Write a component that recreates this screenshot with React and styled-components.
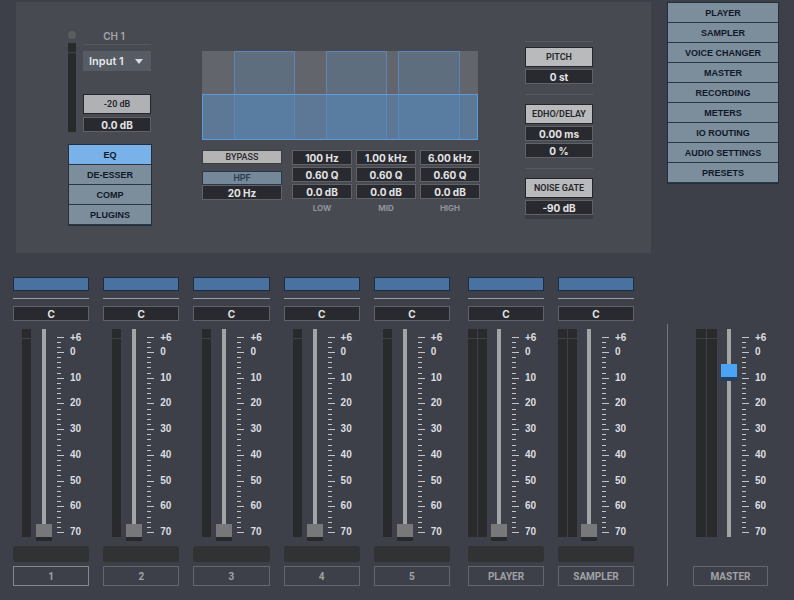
import React, { useState } from 'react'
import styled, { createGlobalStyle, css } from 'styled-components'

const menuItems = [
  'PLAYER',
  'SAMPLER',
  'VOICE CHANGER',
  'MASTER',
  'RECORDING',
  'METERS',
  'IO ROUTING',
  'AUDIO SETTINGS',
  'PRESETS'
]

const effectTabs = ['EQ', 'DE-ESSER', 'COMP', 'PLUGINS']

const bands = [
  { name: 'LOW', freq: '100 Hz', q: '0.60 Q', gain: '0.0 dB' },
  { name: 'MID', freq: '1.00 kHz', q: '0.60 Q', gain: '0.0 dB' },
  { name: 'HIGH', freq: '6.00 kHz', q: '0.60 Q', gain: '0.0 dB' }
]

const inputChannels = ['1', '2', '3', '4', '5']
const playerChannels = ['PLAYER', 'SAMPLER']

const scaleLabels = ['0', '10', '20', '30', '40', '50', '60', '70']

// two small marks between +6 and 0, four between every decade after that
const scaleTicks = [
  { y: 8, long: true },
  { y: 13 },
  { y: 18 }
]
for (let i = 0; i <= 35; i++) {
  scaleTicks.push({ y: 23 + Math.round((i * 180) / 35), long: i % 5 === 0 })
}

const Field = ({ label, value }) => (
  <ValueInput aria-label={label} defaultValue={value} />
)

const Fader = ({ name, stereo, master, level }) => (
  <FaderRow $master={master}>
    <MeterSlot $single={!stereo}>
      <Meter />
      {stereo && <Meter />}
    </MeterSlot>
    <FaderInput
      type='range'
      min='0'
      max='100'
      defaultValue={level}
      aria-label={`${name} level`}
      $master={master}
    />
    <Ticks width='7' height='208' aria-hidden='true'>
      {scaleTicks.map(tick => (
        <rect
          key={tick.y}
          x='0'
          y={tick.y}
          width={tick.long ? 7 : 4}
          height='1'
        />
      ))}
    </Ticks>
    <Scale>
      <span>+6</span>
      <div>
        {scaleLabels.map(label => (
          <span key={label}>{label}</span>
        ))}
      </div>
    </Scale>
  </FaderRow>
)

const Channel = ({ name, stereo, selected, onSelect }) => (
  <Strip>
    <ColorBar aria-label={`${name} color`} />
    <StripRule />
    <Field label={`${name} pan`} value='C' />
    <Fader name={name} stereo={stereo} level={0} />
    <NameSlot />
    <ChannelButton $selected={selected} onClick={() => onSelect(name)}>
      {name}
    </ChannelButton>
  </Strip>
)

const InputSection = () => {
  const [tab, setTab] = useState('EQ')

  return (
    <InputColumn>
      <InputTop>
        <LevelColumn>
          <Led />
          <Meter />
        </LevelColumn>
        <InputControls>
          <h2>CH 1</h2>
          <SelectWrap>
            <select aria-label='Input source' defaultValue='Input 1'>
              <option>Input 1</option>
              <option>Input 2</option>
            </select>
            <svg width='8' height='5' viewBox='0 0 8 5' aria-hidden='true'>
              <path d='M0 0h8L4 5z' fill='#d8dadd' />
            </svg>
          </SelectWrap>
          <PadButton>-20 dB</PadButton>
          <Field label='Gain' value='0.0 dB' />
        </InputControls>
      </InputTop>
      <ButtonList>
        {effectTabs.map(name => (
          <ListButton
            key={name}
            $active={tab === name}
            onClick={() => setTab(name)}>
            {name}
          </ListButton>
        ))}
      </ButtonList>
    </InputColumn>
  )
}

const EqSection = () => (
  <EqColumn>
    <EqGraph viewBox='0 0 276 89' preserveAspectRatio='none' aria-hidden='true'>
      <rect width='276' height='89' fill='#62666c' />
      <rect x='0' y='43' width='276' height='46' fill='#5d7896' />
      {[[32, 60], [124, 60], [196, 61]].map(([x, w]) => (
        <g key={x}>
          <rect x={x} y='0' width={w} height='43' fill='#5f6e7e' />
          <rect x={x} y='43' width={w} height='46' fill='#597ca1' />
          <rect
            x={x + 0.5}
            y='0.5'
            width={w}
            height='88'
            fill='none'
            stroke='#5b86b6'
          />
        </g>
      ))}
      <rect
        x='0.5'
        y='43.5'
        width='275'
        height='45'
        fill='none'
        stroke='#5c9ada'
      />
    </EqGraph>
    <EqControls>
      <FilterColumn>
        <SmallButton>BYPASS</SmallButton>
        <div>
          <SmallButton $blue>HPF</SmallButton>
          <Field label='HPF frequency' value='20 Hz' />
        </div>
      </FilterColumn>
      <BandGrid>
        {bands.map(band => (
          <BandColumn key={band.name}>
            <Field label={`${band.name} frequency`} value={band.freq} />
            <Field label={`${band.name} Q`} value={band.q} />
            <Field label={`${band.name} gain`} value={band.gain} />
            <span>{band.name}</span>
          </BandColumn>
        ))}
      </BandGrid>
    </EqControls>
  </EqColumn>
)

const FxSection = () => (
  <FxColumn>
    <FxGroup $tight>
      <PadButton $light>PITCH</PadButton>
      <Field label='Pitch' value='0 st' />
    </FxGroup>
    <FxGroup>
      <PadButton $light>EDHO/DELAY</PadButton>
      <Field label='Delay time' value='0.00 ms' />
      <Field label='Delay amount' value='0 %' />
    </FxGroup>
    <FxGroup>
      <PadButton $light>NOISE GATE</PadButton>
      <Field label='Noise gate threshold' value='-90 dB' />
      <GateMeter />
    </FxGroup>
  </FxColumn>
)

const App = () => {
  const [selected, setSelected] = useState('1')

  return (
    <>
      <GlobalStyle />
      <Header>
        <Panel>
          <InputSection />
          <EqSection />
          <FxSection />
        </Panel>
        <nav>
          <ButtonList>
            {menuItems.map(item => (
              <ListButton key={item}>{item}</ListButton>
            ))}
          </ButtonList>
        </nav>
      </Header>
      <Mixer>
        <Bank $count={5}>
          {inputChannels.map(name => (
            <Channel
              key={name}
              name={name}
              selected={selected === name}
              onSelect={setSelected}
            />
          ))}
        </Bank>
        <Bank $count={2}>
          {playerChannels.map(name => (
            <Channel
              key={name}
              name={name}
              stereo
              selected={selected === name}
              onSelect={setSelected}
            />
          ))}
        </Bank>
        <MasterStrip>
          <Fader name='MASTER' stereo master level={82} />
          <ChannelButton>MASTER</ChannelButton>
        </MasterStrip>
      </Mixer>
    </>
  )
}

export default App

const GlobalStyle = createGlobalStyle`
  * {
    box-sizing: border-box;
  }
  body {
    margin: 0;
    background: #3d4048;
    font-family: Inter, 'Liberation Sans', sans-serif;
    font-size: 10px;
  }
  button, input, select {
    display: block;
    margin: 0;
    font-family: inherit;
  }
  button {
    cursor: pointer;
  }
`

const Header = styled.header`
  display: grid;
  grid-template-columns: minmax(0, 1fr) 112px;
  align-items: start;
  gap: 16px;
  padding: 2px 15px 0 16px;
`

const Panel = styled.section`
  display: flex;
  min-height: 251px;
  padding: 28px 52px 0;
  background: #474a51;
`

const ButtonList = styled.div`
  display: flex;
  flex-direction: column;
  border: 1px solid #232f3d;
`

const ListButton = styled.button`
  height: 20px;
  padding: 0;
  border: none;
  border-bottom: 1px solid #2b3746;
  background: ${props => (props.$active ? '#79b1e9' : '#7c8d9b')};
  color: #10182a;
  font-family: 'Liberation Sans', Arial, sans-serif;
  font-size: 9px;
  font-weight: bold;
`

const ValueInput = styled.input`
  width: 100%;
  height: 15px;
  padding: 0;
  border: 1px solid #606267;
  background: #292a2f;
  color: #e4e4e6;
  font-size: 10px;
  font-weight: 700;
  line-height: 13px;
  text-align: center;
`

const PadButton = styled.button`
  width: 100%;
  height: 20px;
  padding: 0;
  border: 1px solid #24262a;
  background: ${props => (props.$light ? '#b9babc' : '#b0b1b4')};
  color: #25262a;
  font-family: Roboto, 'Liberation Sans', sans-serif;
  font-size: 9px;
  font-weight: 600;
  white-space: nowrap;
`

const SmallButton = styled.button`
  width: 100%;
  height: 14px;
  padding: 0;
  border: 1px solid ${props => (props.$blue ? '#2a3745' : '#3a3b3e')};
  background: ${props => (props.$blue ? '#75889a' : '#b4b4b5')};
  color: ${props => (props.$blue ? '#25364a' : '#2b2c2f')};
  font-family: Roboto, 'Liberation Sans', sans-serif;
  font-size: 9px;
  font-weight: 500;
  line-height: 12px;
`

const InputColumn = styled.div`
  width: 84px;
  margin-right: 50px;
`

const InputTop = styled.div`
  display: grid;
  grid-template-columns: 8px 1fr;
  gap: 7px;
  padding-right: 1px;
  margin-bottom: 12px;
`

const Meter = styled.div`
  flex: 1;
  background: linear-gradient(#292a2c 9px, #3f4144 9px, #3f4144 10px, #292a2c 10px);
`

const LevelColumn = styled.div`
  display: flex;
  flex-direction: column;
  gap: 4px;
  padding-top: 1px;
`

const Led = styled.div`
  height: 8px;
  border-radius: 50%;
  background: #5c5d60;
`

const InputControls = styled.div`
  h2 {
    margin: 0 0 6px;
    padding: 0 6px 2px 0;
    border-bottom: 1px solid #56585d;
    color: #a3a5a9;
    font-size: 10px;
    font-weight: 600;
    line-height: 12px;
    text-align: center;
  }
  ${PadButton} {
    margin-bottom: 3px;
  }
`

const SelectWrap = styled.div`
  position: relative;
  margin-bottom: 23px;
  select {
    width: 100%;
    height: 20px;
    padding: 0 0 0 6px;
    border: none;
    background: #575b63;
    color: #e6e7e9;
    font-size: 11px;
    font-weight: 600;
    appearance: none;
  }
  svg {
    position: absolute;
    top: 8px;
    right: 8px;
    pointer-events: none;
  }
`

const EqColumn = styled.div`
  flex: 1;
  min-width: 0;
  margin: 21px 45px 0 0;
`

const EqGraph = styled.svg`
  display: block;
  width: 100%;
  height: 89px;
  padding-right: 2px;
  margin-bottom: 10px;
`

const EqControls = styled.div`
  display: grid;
  grid-template-columns: 80px minmax(0, 1fr);
  column-gap: 10px;
`

const FilterColumn = styled.div`
  display: flex;
  flex-direction: column;
  gap: 7px;
`

const BandGrid = styled.div`
  display: grid;
  grid-template-columns: repeat(3, minmax(0, 1fr));
  column-gap: 4px;
`

const BandColumn = styled.div`
  display: flex;
  flex-direction: column;
  gap: 2px;
  span {
    margin-top: 2px;
    color: #92949a;
    font-size: 8px;
    font-weight: 700;
    line-height: 10px;
    text-align: center;
  }
`

const FxColumn = styled.div`
  width: 68px;
  margin: 11px 6px 0 0;
`

const FxGroup = styled.div`
  display: flex;
  flex-direction: column;
  gap: 2px;
  padding: ${props => (props.$tight ? '5px' : '9px')} 0 10px;
  border-top: 1px solid #585a5f;
`

const GateMeter = styled.div`
  height: 4px;
  margin-top: -2px;
  background: #3b3d42;
`

const Mixer = styled.main`
  display: grid;
  grid-template-columns: minmax(0, 1fr) 166px 134px;
  padding: 24px 26px 14px 13px;
`

const Bank = styled.section`
  display: grid;
  grid-template-columns: repeat(${props => props.$count}, minmax(0, 1fr));
  gap: 14px;
  ${props =>
    props.$count === 5 &&
    css`
      margin-right: 18px;
    `}
`

const Strip = styled.div`
  display: flex;
  flex-direction: column;
`

const ColorBar = styled.button`
  height: 14px;
  margin-bottom: 7px;
  padding: 0;
  border: 1px solid #1d2c40;
  background: #4972a1;
`

const StripRule = styled.div`
  height: 1px;
  margin-bottom: 7px;
  background: #9a9da2;
`

const FaderRow = styled.div`
  display: grid;
  grid-template-columns: ${props => (props.$master ? '25px' : '23px')} 16px 12px 1fr;
  height: 208px;
  margin: 8px 0 9px;
  padding-left: ${props => (props.$master ? '3px' : '0')};
`

const MeterSlot = styled.div`
  display: flex;
  gap: 1px;
  height: 208px;
  padding: ${props => (props.$single ? '0 5px 0 9px' : '0 4px 0 0')};
`

const FaderInput = styled.input`
  width: 16px;
  height: 208px;
  background: linear-gradient(#a2a4a6, #a2a4a6) center / 4px 100% no-repeat;
  appearance: none;
  writing-mode: vertical-lr;
  direction: rtl;
  &::-webkit-slider-thumb {
    width: 16px;
    height: 13px;
    border: none;
    border-radius: 0;
    background: ${props => (props.$master ? '#4ba3f5' : '#77787a')};
    box-shadow: 0 4px 0 ${props => (props.$master ? '#24415f' : '#27292d')};
    appearance: none;
  }
`

const Ticks = styled.svg`
  display: block;
  margin-left: 5px;
  fill: #c3c5c8;
`

const Scale = styled.div`
  margin-left: 6px;
  padding-top: 2px;
  color: #dcdde0;
  font-family: 'Liberation Sans', Arial, sans-serif;
  font-size: 10px;
  font-weight: bold;
  line-height: 14px;
  span {
    display: block;
  }
  div {
    display: flex;
    flex-direction: column;
    justify-content: space-between;
    height: 194px;
  }
`

const NameSlot = styled.div`
  height: 16px;
  margin-bottom: 4px;
  border-radius: 3px;
  background: #313234;
`

const ChannelButton = styled.button`
  height: 20px;
  padding: 0;
  border: 1px solid #63666c;
  ${props =>
    props.$selected &&
    css`
      border-color: #85878b;
    `}
  background: transparent;
  color: #a0a2a7;
  font-family: Roboto, 'Liberation Sans', sans-serif;
  font-size: 10px;
  font-weight: 700;
`

const MasterStrip = styled.section`
  display: flex;
  flex-direction: column;
  justify-content: space-between;
  margin: 47px 0 0 33px;
  padding-left: 25px;
  border-left: 1px solid #74777c;
  ${FaderRow} {
    margin-top: 5px;
  }
`
